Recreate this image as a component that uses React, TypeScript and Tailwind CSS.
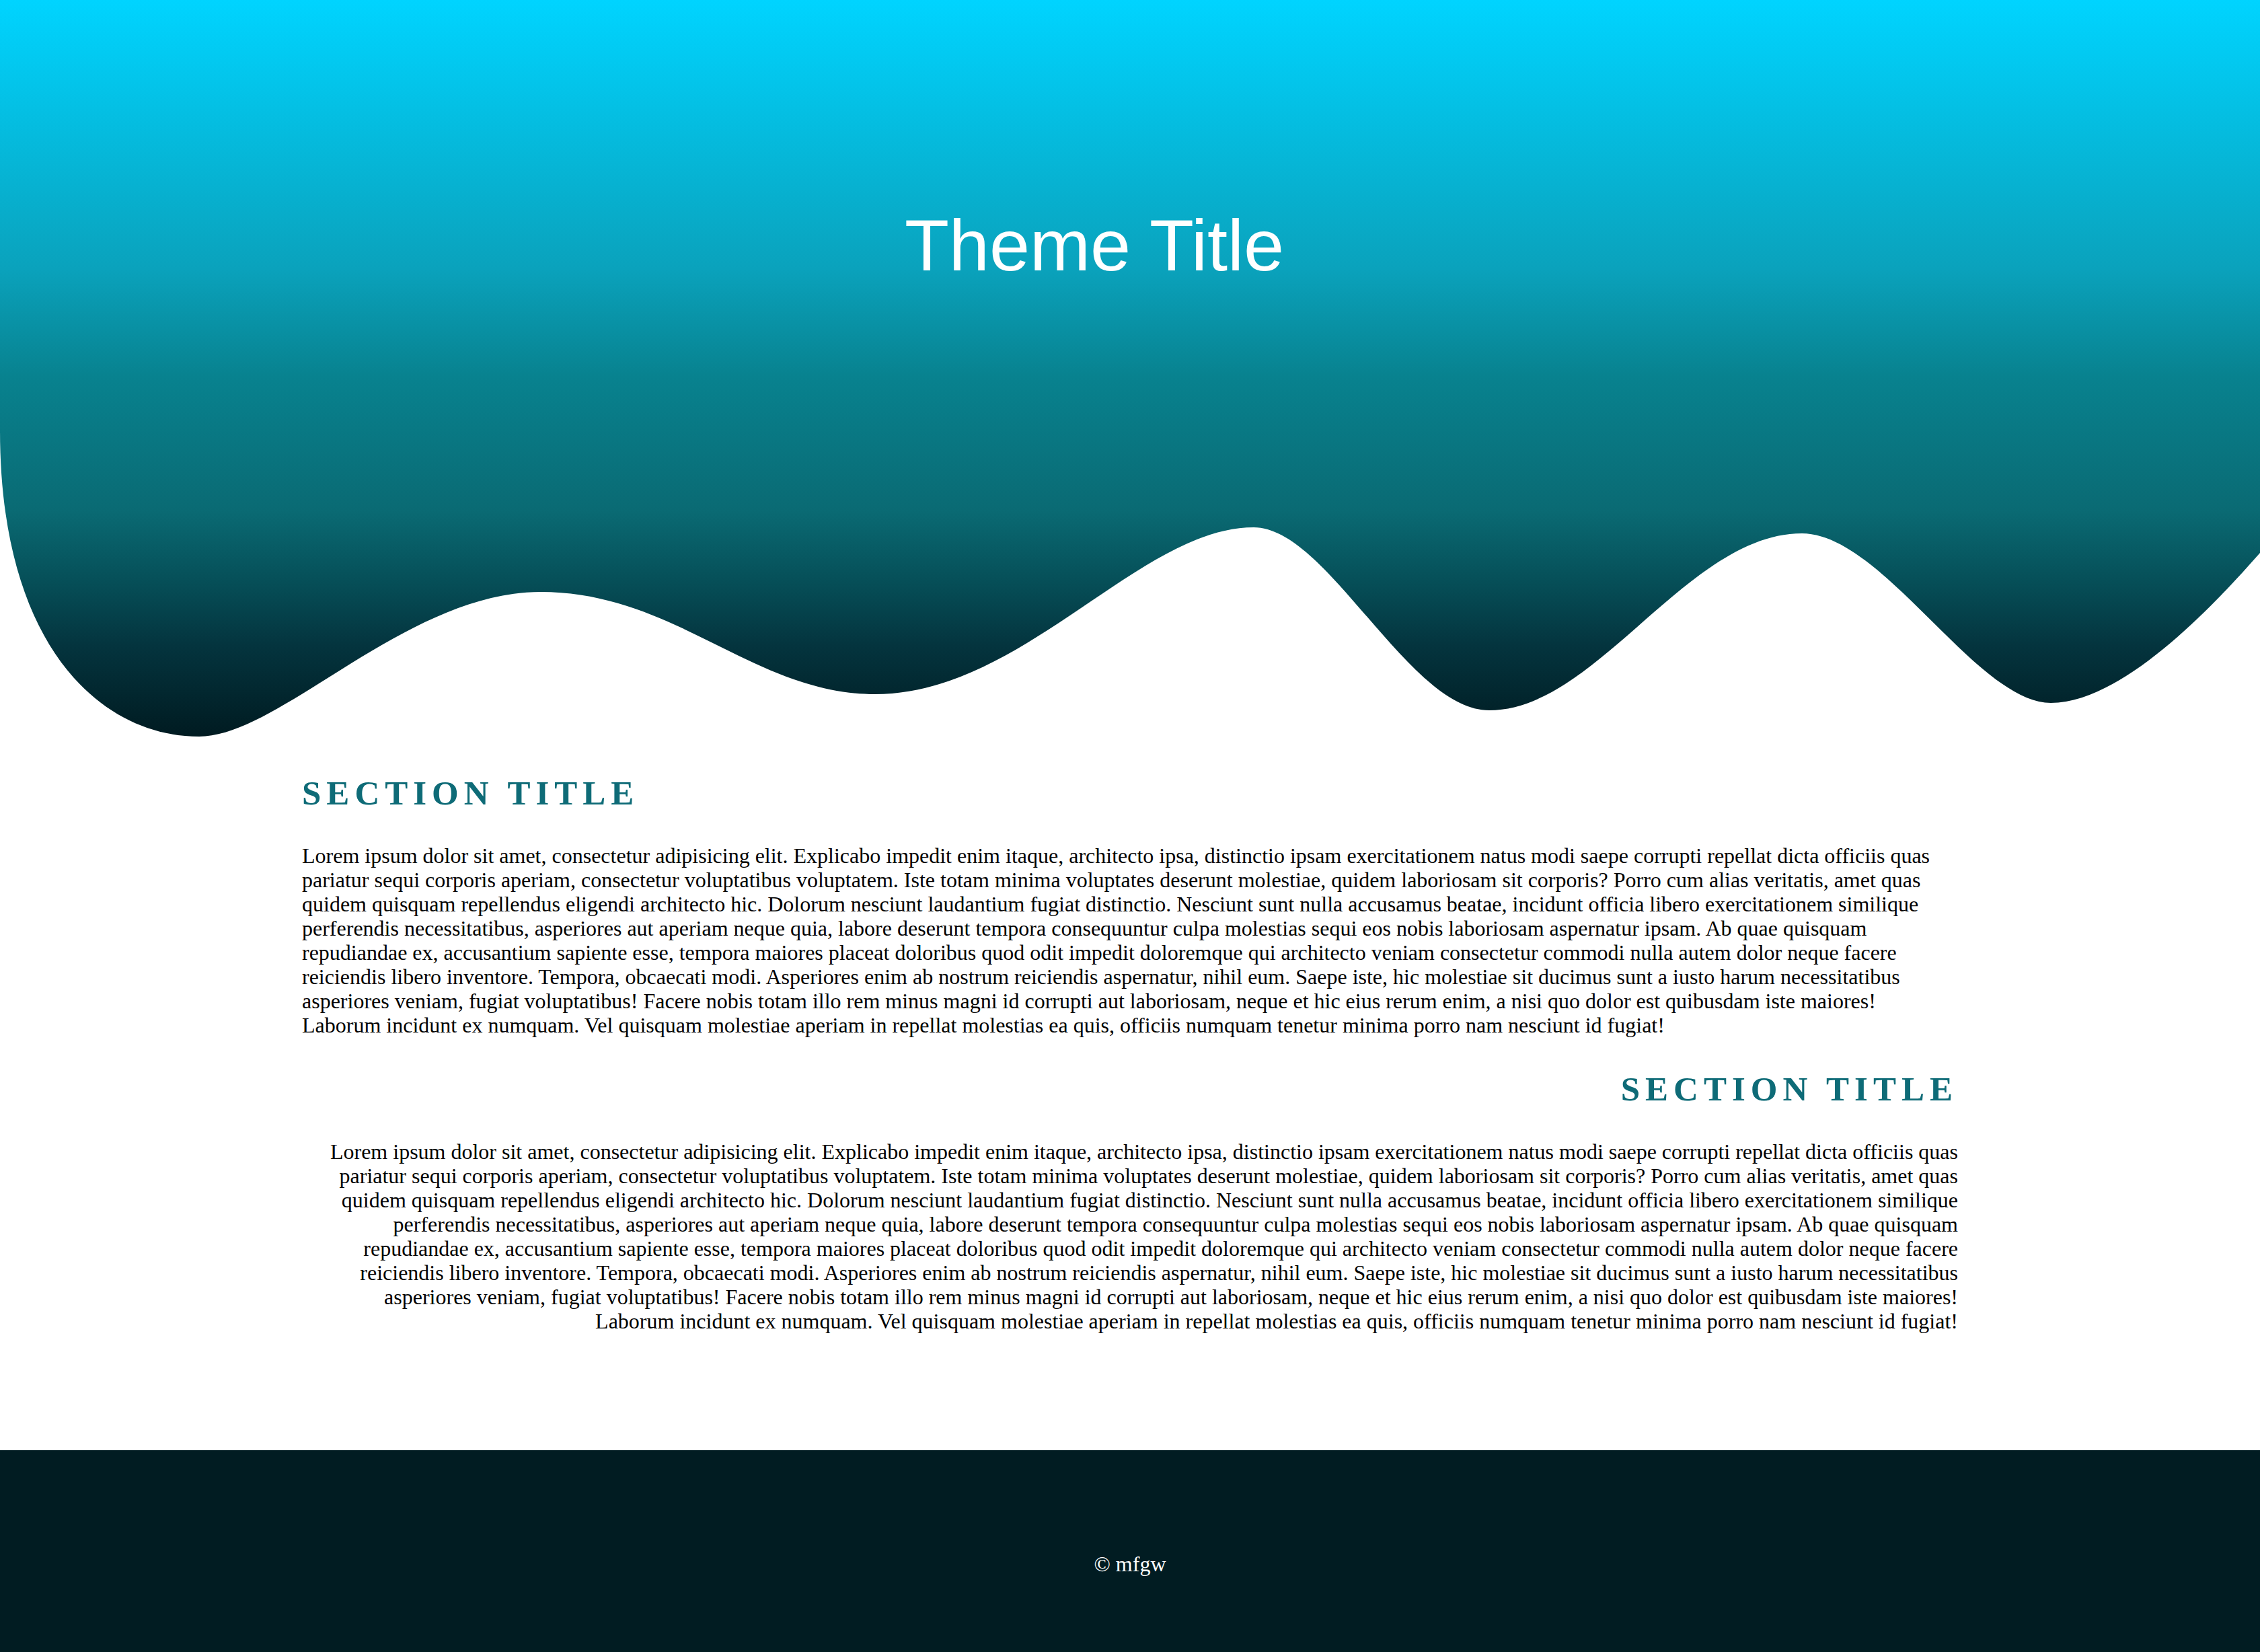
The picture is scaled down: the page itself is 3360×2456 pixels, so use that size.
const lorem =
  "Lorem ipsum dolor sit amet, consectetur adipisicing elit. Explicabo impedit enim itaque, architecto ipsa, distinctio ipsam exercitationem natus modi saepe corrupti repellat dicta officiis quas pariatur sequi corporis aperiam, consectetur voluptatibus voluptatem. Iste totam minima voluptates deserunt molestiae, quidem laboriosam sit corporis? Porro cum alias veritatis, amet quas quidem quisquam repellendus eligendi architecto hic. Dolorum nesciunt laudantium fugiat distinctio. Nesciunt sunt nulla accusamus beatae, incidunt officia libero exercitationem similique perferendis necessitatibus, asperiores aut aperiam neque quia, labore deserunt tempora consequuntur culpa molestias sequi eos nobis laboriosam aspernatur ipsam. Ab quae quisquam repudiandae ex, accusantium sapiente esse, tempora maiores placeat doloribus quod odit impedit doloremque qui architecto veniam consectetur commodi nulla autem dolor neque facere reiciendis libero inventore. Tempora, obcaecati modi. Asperiores enim ab nostrum reiciendis aspernatur, nihil eum. Saepe iste, hic molestiae sit ducimus sunt a iusto harum necessitatibus asperiores veniam, fugiat voluptatibus! Facere nobis totam illo rem minus magni id corrupti aut laboriosam, neque et hic eius rerum enim, a nisi quo dolor est quibusdam iste maiores! Laborum incidunt ex numquam. Vel quisquam molestiae aperiam in repellat molestias ea quis, officiis numquam tenetur minima porro nam nesciunt id fugiat!";

function Wave() {
  return (
    <svg
      viewBox="0 0 3360 1100"
      preserveAspectRatio="none"
      className="absolute inset-0 h-full w-full"
    >
      <defs>
        <linearGradient id="drip" x1="0" y1="0" x2="0" y2="1100" gradientUnits="userSpaceOnUse">
          <stop offset="0" stopColor="#00d4ff" />
          <stop offset="0.364" stopColor="#0aa2bc" />
          <stop offset="0.509" stopColor="#08828f" />
          <stop offset="0.691" stopColor="#0a6a73" />
          <stop offset="0.782" stopColor="#065059" />
          <stop offset="0.873" stopColor="#04343e" />
          <stop offset="1" stopColor="#001a20" />
        </linearGradient>
      </defs>
      <path
        fill="url(#drip)"
        d="M0,0 L0,640 C0,960 150,1095 296,1095 C416,1095 604,880 804,880 C1004,880 1121,1032 1301,1032 C1521,1032 1694,784 1864,784 C1974,784 2094,1056 2214,1056 C2374,1056 2509,793 2679,793 C2799,793 2939,1045 3049,1045 C3159,1045 3300,890 3360,822 L3360,0 Z"
      />
    </svg>
  );
}

function Section({ align }: { align: "left" | "right" }) {
  const side = align === "right" ? "text-right" : "text-left";
  return (
    <section>
      <h2
        className={`${side} text-[51px] font-bold uppercase leading-[51px] tracking-[8px] text-[#0e6b77]`}
      >
        Section Title
      </h2>
      <p className={`${side} mt-[49px] text-[32px] leading-[36px] text-black`}>{lorem}</p>
    </section>
  );
}

export default function App() {
  return (
    <div className="min-h-screen bg-white font-['Liberation_Serif','Times_New_Roman',serif]">
      <header className="relative h-[1100px] w-full">
        <Wave />
        <div className="relative flex justify-center pr-[106px] pt-[311px]">
          <h1 className="font-['Liberation_Sans',Arial,Helvetica,sans-serif] text-[108px] leading-[108px] text-white">
            Theme Title
          </h1>
        </div>
      </header>

      <main className="mx-auto flex w-[2462px] flex-col gap-[52px] pb-[174px] pt-[54px]">
        <Section align="left" />
        <Section align="right" />
      </main>

      <footer className="h-[300px] bg-[#011c22] pt-[151px] text-center text-[32px] leading-[36px] text-white">
        © mfgw
      </footer>
    </div>
  );
}
